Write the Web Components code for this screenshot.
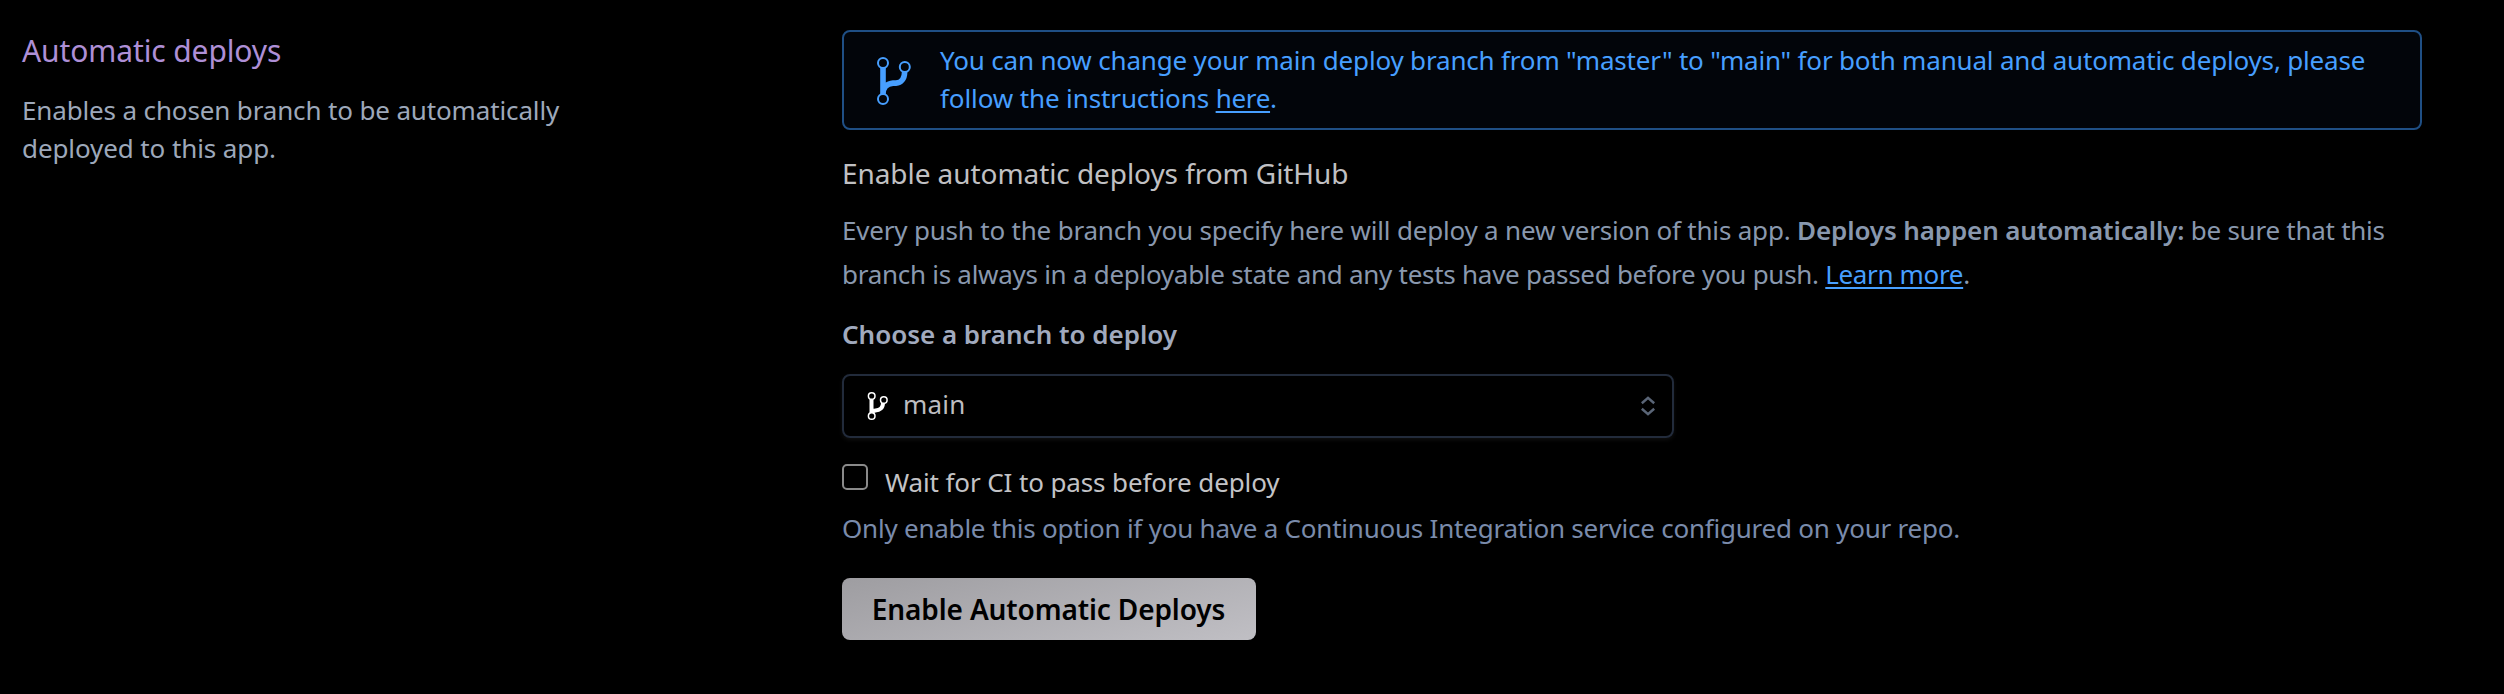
<!DOCTYPE html>
<html lang="en">
<head>
<meta charset="utf-8">
<title>Automatic deploys</title>
<style>
html,body{margin:0;background:#000}
body{font:26px/38px "Noto Sans","Open Sans",sans-serif;height:694px;overflow:hidden}
</style>
</head>
<body>
<deploy-settings></deploy-settings>
<script>
const define = (name, html) => customElements.define(name, class extends HTMLElement {
  connectedCallback() {
    const t = document.createElement('template');
    t.innerHTML = html;
    this.attachShadow({ mode: 'open' }).append(t.content.cloneNode(true));
  }
});

define('branch-icon', `
<style>:host{display:block;flex:none;width:36px;height:50px}svg{display:block;width:100%;height:100%}</style>
<svg viewBox="0 0 36 50" fill="none" stroke="currentColor">
<path stroke-width="5.6" d="M7 12V38M28.6 16C28.6 23 25 26.8 20 27.1H17C11.500 27.500 7 31 7 38"/>
<g stroke-width="2" fill="var(--hole,#000)"><circle cx="7" cy="7" r="5"/><circle cx="28.800" cy="11" r="5"/><circle cx="7" cy="43" r="5"/></g>
</svg>`);

define('small-branch-icon', `
<style>:host{display:block;flex:none;width:22px;height:30px}svg{display:block}</style>
<svg width="22" height="30" viewBox="0 0 22 30" fill="none" stroke="currentColor">
<path stroke-width="4" d="M5.500 8V22M17 12C17 17 13.500 19.300 9.500 19.500C7.500 19.700 5.500 20.500 5.500 23"/>
<g stroke-width="1.500" fill="#000"><circle cx="5.700" cy="5" r="3.300"/><circle cx="17.800" cy="9" r="3.300"/><circle cx="5.700" cy="25" r="3.300"/></g>
</svg>`);

define('settings-intro', `
<style>
:host{display:block;width:820px;padding:31px 0 0 22px;box-sizing:border-box;white-space:nowrap;color:#9da8ba}
h2{margin:0 0 20px;font-size:30px;line-height:40px;font-weight:400;color:#ae8fd6;letter-spacing:-.11px}
.a{letter-spacing:-.143px}.b{letter-spacing:-.1px}
</style>
<h2><slot name="title"></slot></h2>
<div class="a">Enables a chosen branch to be automatically</div>
<div class="b">deployed to this app.</div>`);

define('info-banner', `
<style>
:host{display:flex;box-sizing:border-box;width:1580px;height:100px;border:2px solid #1f4f85;border-radius:8px;background:#02050a;color:#479fff;padding:9px 0 0 32px;white-space:nowrap;--hole:#02050a}
branch-icon{margin:15px 28px 0 0}
</style>
<branch-icon></branch-icon><div><slot></slot></div>`);

define('text-span', `
<style>:host{display:inline}</style><slot></slot>`);

define('branch-select', `
<style>
:host{display:flex;align-items:center;box-sizing:border-box;width:832px;height:64px;border:2px solid #222b3b;border-radius:8px;padding:0 17px 0 22px;color:#bdbdc1;box-shadow:0 2px 4px rgba(255,255,255,.06)}
small-branch-icon{color:#fff}
span{flex:1;margin:-4px 0 0 15px;letter-spacing:.2px}
svg{flex:none}
</style>
<small-branch-icon></small-branch-icon><span><slot></slot></span>
<svg width="14" height="20" viewBox="0 0 14 20" fill="none" stroke="#5a6577" stroke-width="2.500"><path d="M.8 7.200L7 1.800L13.200 7.200M.8 12.800L7 18.200L13.200 12.800"/></svg>`);

define('check-option', `
<style>
:host{display:flex;height:38px;color:#c3c3c6;white-space:nowrap;letter-spacing:-.115px}
i{box-sizing:border-box;width:26px;height:26px;margin:1px 17px 0 0;border:2px solid #8a8a8a;border-radius:5px}
</style>
<i></i><slot></slot>`);

define('action-button', `
<style>
:host{display:block}
button{display:block;box-sizing:border-box;width:414px;height:62px;border:0;border-radius:8px;padding:0 1px 0 0;background:linear-gradient(165deg,#9e9da1,#c0bfc4);color:#000;font:600 28px/40px "Noto Sans","Open Sans",sans-serif;letter-spacing:-.13px;white-space:nowrap}
</style>
<button><slot></slot></button>`);

define('deploy-form', `
<style>
:host{display:flex;flex-direction:column;align-items:flex-start;padding-top:30px;white-space:nowrap}
a{color:#479fff;text-decoration:underline;text-decoration-thickness:2px;text-underline-offset:3px;text-decoration-skip-ink:none}
info-banner a{color:inherit}
h3{margin:23px 0 15px;font-size:28px;line-height:40px;font-weight:400;color:#c0c0c3;letter-spacing:-.07px}
p{margin:0;color:#8998ae;line-height:44px}
b{font-weight:600;letter-spacing:-.13px}
label{margin:19px 0 21px;font-weight:600;color:#a1aabe;letter-spacing:-.02px}
check-option{margin-top:25px}
.hint{margin:8px 0 31px;color:#7a8bab;letter-spacing:-.225px}
</style>
<info-banner><div style="letter-spacing:-.178px">You can now change your main deploy branch from "master" to "main" for both manual and automatic deploys, please</div><div style="letter-spacing:-.115px">follow the instructions <a style="letter-spacing:-.3px">here</a>.</div></info-banner>
<h3>Enable automatic deploys from GitHub</h3>
<p><text-span style="letter-spacing:-.196px">Every push to the branch you specify here will deploy a new version of this app. </text-span><b>Deploys happen automatically:</b><text-span style="letter-spacing:-.26px"> be sure that this</text-span><br><text-span style="letter-spacing:-.277px">branch is always in a deployable state and any tests have passed before you push. </text-span><a style="letter-spacing:-.35px">Learn more</a>.</p>
<label>Choose a branch to deploy</label>
<branch-select>main</branch-select>
<check-option>Wait for CI to pass before deploy</check-option>
<div class="hint">Only enable this option if you have a Continuous Integration service configured on your repo.</div>
<action-button>Enable Automatic Deploys</action-button>`);

define('deploy-settings', `
<style>:host{display:grid;grid-template-columns:842px 1fr;height:694px;background:#000}</style>
<settings-intro><span slot="title">Automatic deploys</span></settings-intro>
<deploy-form></deploy-form>`);
</script>
</body>
</html>
